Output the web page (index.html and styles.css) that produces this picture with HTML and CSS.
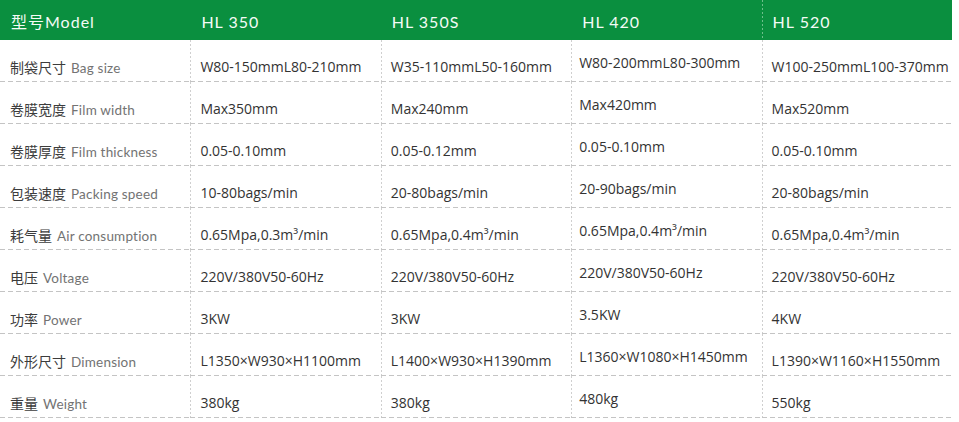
FILE: index.html
```html
<!DOCTYPE html>
<html lang="zh">
<head>
<meta charset="utf-8">
<title>参数表</title>
<link rel="stylesheet" href="styles.css">
</head>
<body>
<div class="spec">
  <div class="hd">型号Model</div>
  <div class="hd">HL 350</div>
  <div class="hd">HL 350S</div>
  <div class="hd">HL 420</div>
  <div class="hd last">HL 520</div>

  <div class="cell label"><span class="zh">制袋尺寸</span><span class="en">Bag size</span></div>
  <div class="cell">W80-150mmL80-210mm</div>
  <div class="cell">W35-110mmL50-160mm</div>
  <div class="cell up">W80-200mmL80-300mm</div>
  <div class="cell">W100-250mmL100-370mm</div>

  <div class="cell label"><span class="zh">卷膜宽度</span><span class="en">Film width</span></div>
  <div class="cell">Max350mm</div>
  <div class="cell">Max240mm</div>
  <div class="cell up">Max420mm</div>
  <div class="cell">Max520mm</div>

  <div class="cell label"><span class="zh">卷膜厚度</span><span class="en">Film thickness</span></div>
  <div class="cell">0.05-0.10mm</div>
  <div class="cell">0.05-0.12mm</div>
  <div class="cell up">0.05-0.10mm</div>
  <div class="cell">0.05-0.10mm</div>

  <div class="cell label"><span class="zh">包装速度</span><span class="en">Packing speed</span></div>
  <div class="cell">10-80bags/min</div>
  <div class="cell">20-80bags/min</div>
  <div class="cell up">20-90bags/min</div>
  <div class="cell">20-80bags/min</div>

  <div class="cell label"><span class="zh">耗气量</span><span class="en">Air consumption</span></div>
  <div class="cell">0.65Mpa,0.3m³/min</div>
  <div class="cell">0.65Mpa,0.4m³/min</div>
  <div class="cell up">0.65Mpa,0.4m³/min</div>
  <div class="cell">0.65Mpa,0.4m³/min</div>

  <div class="cell label"><span class="zh">电压</span><span class="en">Voltage</span></div>
  <div class="cell">220V/380V50-60Hz</div>
  <div class="cell">220V/380V50-60Hz</div>
  <div class="cell up">220V/380V50-60Hz</div>
  <div class="cell">220V/380V50-60Hz</div>

  <div class="cell label"><span class="zh">功率</span><span class="en">Power</span></div>
  <div class="cell">3KW</div>
  <div class="cell">3KW</div>
  <div class="cell up">3.5KW</div>
  <div class="cell">4KW</div>

  <div class="cell label"><span class="zh">外形尺寸</span><span class="en">Dimension</span></div>
  <div class="cell">L1350×W930×H1100mm</div>
  <div class="cell">L1400×W930×H1390mm</div>
  <div class="cell up">L1360×W1080×H1450mm</div>
  <div class="cell">L1390×W1160×H1550mm</div>

  <div class="cell label"><span class="zh">重量</span><span class="en">Weight</span></div>
  <div class="cell">380kg</div>
  <div class="cell">380kg</div>
  <div class="cell up">480kg</div>
  <div class="cell">550kg</div>
</div>
</body>
</html>
```

FILE: styles.css
```css
html, body {
  margin: 0;
  padding: 0;
  background: #ffffff;
}

.spec {
  width: 952px;
  display: grid;
  grid-template-columns: repeat(5, 1fr);
  grid-template-rows: 40px repeat(9, 42px);
}

.hd {
  box-sizing: border-box;
  padding: 12px 0 0 11px;
  background: #0a8f3f;
  color: #f4fbf6;
  font-family: "Lato", "Noto Sans CJK SC", sans-serif;
  font-weight: 400;
  font-size: 16px;
  letter-spacing: 1px;
  line-height: 20px;
  white-space: nowrap;
}

.hd.last {
  background-image: linear-gradient(to bottom, #6cbf8a 55%, transparent 0);
  background-size: 1px 4px;
  background-repeat: repeat-y;
  background-position: left top;
}

.cell {
  box-sizing: border-box;
  padding: 17px 0 0 10px;
  line-height: 20px;
  font-family: "Open Sans", "Noto Sans CJK SC", sans-serif;
  font-size: 14px;
  color: #333333;
  white-space: nowrap;
  overflow: hidden;
  background-image:
    linear-gradient(to right, #c4c4c4 62%, transparent 0),
    linear-gradient(to bottom, #cfcfcf 45%, transparent 0);
  background-size: 8px 1px, 1px 4px;
  background-repeat: repeat-x, repeat-y;
  background-position: left bottom, left top;
}

.cell.label {
  display: flex;
  align-items: baseline;
  gap: 5px;
  background-image: linear-gradient(to right, #c4c4c4 62%, transparent 0);
  background-size: 8px 1px;
  background-repeat: repeat-x;
  background-position: left bottom;
}

.cell.up {
  padding-top: 13px;
  padding-left: 8px;
}

.zh {
  font-family: "Noto Sans CJK SC", sans-serif;
  font-size: 14px;
  line-height: 20px;
  color: #3c3c3c;
}

.en {
  font-family: "Lato", "Noto Sans", sans-serif;
  font-size: 13.5px;
  line-height: 20px;
  color: #737373;
  letter-spacing: 0.2px;
}
```
